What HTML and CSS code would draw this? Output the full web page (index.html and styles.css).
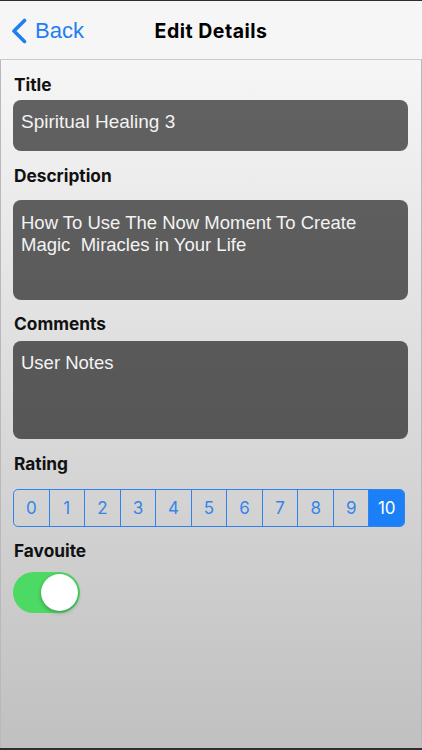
FILE: index.html
```html
<!DOCTYPE html>
<html lang="en">
<head>
<meta charset="utf-8">
<title>Edit Details</title>
<link rel="stylesheet" href="styles.css">
</head>
<body>
<div class="screen">
  <header class="nav">
    <a class="back" href="#">
      <svg class="chev" width="18" height="26" viewBox="0 0 18 26" aria-hidden="true">
        <path d="M14.5 2.5 L4 13 L14.5 23.5" fill="none" stroke="#1f7ff0" stroke-width="3.6" stroke-linecap="round" stroke-linejoin="round"/>
      </svg>
      <span>Back</span>
    </a>
    <h1 class="nav-title">Edit Details</h1>
    <div class="nav-right"></div>
  </header>
  <main class="form">
    <div class="label l-title">Title</div>
    <div class="field f-title">Spiritual Healing 3</div>

    <div class="label l-desc">Description</div>
    <div class="field f-desc">How To Use The Now Moment To Create<br>Magic&nbsp; Miracles in Your Life</div>

    <div class="label l-comm">Comments</div>
    <div class="field f-comm">User Notes</div>

    <div class="label l-rate">Rating</div>
    <div class="segments">
      <span class="seg">0</span>
      <span class="seg">1</span>
      <span class="seg">2</span>
      <span class="seg">3</span>
      <span class="seg">4</span>
      <span class="seg">5</span>
      <span class="seg">6</span>
      <span class="seg">7</span>
      <span class="seg">8</span>
      <span class="seg">9</span>
      <span class="seg active">10</span>
    </div>

    <div class="label l-fav">Favouite</div>
    <div class="switch"><span class="knob"></span></div>
  </main>
</div>
</body>
</html>
```

FILE: styles.css
```css
* { box-sizing: border-box; }
html, body { margin: 0; padding: 0; }
body { width: 422px; height: 750px; overflow: hidden; background: #2a2a2a; }

.screen {
  width: 422px;
  height: 750px;
  border-top: 1px solid #2e2e2e;
  border-bottom: 2px solid #2e2e2e;
  background: linear-gradient(to bottom, #f8f8f8 0px, #f6f6f6 60px, #d7d7d7 450px, #c0c0c0 748px);
  display: flex;
  flex-direction: column;
  box-shadow: inset 1px 0 0 #b9b9b9, inset -1px 0 0 #b9b9b9;
}

.nav {
  height: 59px;
  flex: none;
  background: #f6f6f6;
  border-bottom: 1px solid #c9c9c9;
  display: grid;
  grid-template-columns: 1fr auto 1fr;
  align-items: center;
  padding: 0 12px;
}
.back {
  display: flex;
  align-items: center;
  gap: 7px;
  text-decoration: none;
  color: #1f7ff0;
  font-family: "Liberation Sans", Arial, sans-serif;
  font-size: 22px;
  padding-top: 2px;
}
.chev { display: block; margin-left: -2px; margin-top: -1px; }
.nav-title {
  margin: 0;
  font-family: Inter, "Liberation Sans", sans-serif;
  font-weight: 700;
  font-size: 19.5px;
  color: #000;
  letter-spacing: 0.5px;
  padding-top: 1px;
}

.form {
  display: flex;
  flex-direction: column;
  padding: 15px 14px 0 13px;
}
.label {
  font-family: Inter, "Liberation Sans", sans-serif;
  font-weight: 700;
  font-size: 17.3px;
  line-height: 20px;
  height: 20px;
  color: #111;
  padding-left: 1px;
}
.field {
  background: rgba(0, 0, 0, 0.6);
  border-radius: 8px;
  color: #f3f3f3;
  font-family: "Liberation Sans", Arial, sans-serif;
  font-size: 18.5px;
  line-height: 21.5px;
  padding: 11px 8px 0 8px;
}
.f-title { margin-top: 5px; height: 51px; font-size: 19px; }
.l-desc { margin-top: 15px; }
.f-desc { margin-top: 14px; height: 100px; padding-top: 12px; }
.l-comm { margin-top: 14px; }
.f-comm { margin-top: 7px; height: 98px; }
.l-rate { margin-top: 15px; }

.segments {
  margin-top: 15px;
  width: 392px;
  height: 38px;
  display: flex;
  border: 1.3px solid #2f83ec;
  border-radius: 5px;
  overflow: hidden;
}
.seg {
  flex: 1;
  display: flex;
  align-items: center;
  justify-content: center;
  border-left: 1.3px solid #2f83ec;
  color: #3585e8;
  font-family: Inter, "Liberation Sans", sans-serif;
  font-size: 17px;
}
.seg:first-child { border-left: none; }
.seg.active { background: #1b80f7; color: #fff; }

.l-fav { margin-top: 14px; }
.switch {
  margin-top: 11px;
  width: 67px;
  height: 41px;
  border-radius: 21px;
  background: #4cd964;
  display: flex;
  justify-content: flex-end;
  align-items: center;
  padding: 2px;
}
.knob {
  width: 37px;
  height: 37px;
  border-radius: 50%;
  background: #fff;
  box-shadow: 0 2px 4px rgba(0, 0, 0, 0.25), 0 0 1px rgba(0, 0, 0, 0.2);
}
```
